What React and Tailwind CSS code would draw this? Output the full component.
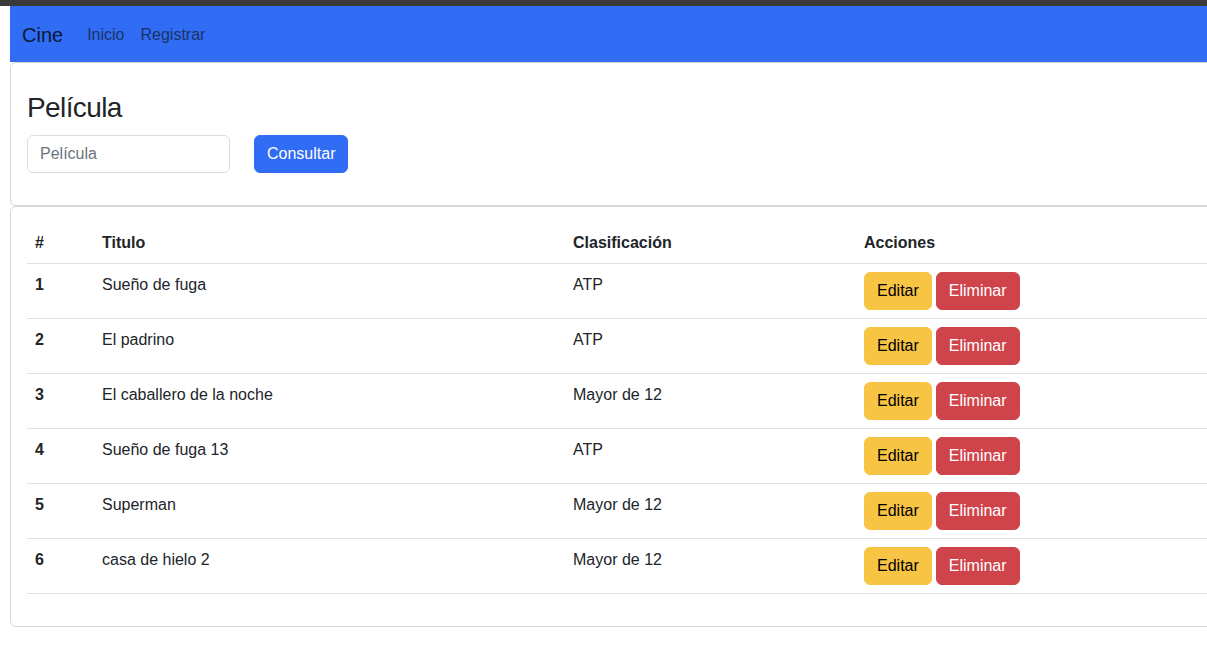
import React from 'react';

const peliculas = [
  { id: 1, titulo: 'Sueño de fuga', clasificacion: 'ATP' },
  { id: 2, titulo: 'El padrino', clasificacion: 'ATP' },
  { id: 3, titulo: 'El caballero de la noche', clasificacion: 'Mayor de 12' },
  { id: 4, titulo: 'Sueño de fuga 13', clasificacion: 'ATP' },
  { id: 5, titulo: 'Superman', clasificacion: 'Mayor de 12' },
  { id: 6, titulo: 'casa de hielo 2', clasificacion: 'Mayor de 12' },
];

const App = () => {
  return (
    <div className="w-[1207px] h-[660px] overflow-hidden bg-white text-[#212529] text-[16px] leading-6 font-['Liberation_Sans',Arial,sans-serif]">
      <div className="h-[6px] bg-[#3a3a3a]" />
      <div className="pl-[10px] w-[1240px]">
        {/* Navbar */}
        <nav className="h-[56px] bg-[#316cf4] flex items-center px-3 pt-[2px]">
          <span className="text-[20px] leading-[30px] text-[#0b1a33] mr-4">Cine</span>
          <a className="px-2 text-[#1a3466]">Inicio</a>
          <a className="px-2 text-[#1a3466]">Registrar</a>
        </nav>

        {/* Buscador */}
        <div className="border border-[#d6d6d6] rounded-[6px] p-4">
          <h3 className="mt-[12px] mb-[10px] text-[28px] leading-[1.2] tracking-[-0.6px]">Película</h3>
          <div className="flex items-center mb-4">
            <input
              placeholder="Película"
              className="w-[203px] h-[38px] border border-[#d9dce0] rounded-[6px] px-3 text-[16px] placeholder:text-[#6c757d] outline-none"
            />
            <button className="ml-6 h-[38px] px-[12px] border border-[#316cf4] rounded-[6px] bg-[#316cf4] text-white">
              Consultar
            </button>
          </div>
        </div>

        {/* Tabla */}
        <div className="border border-[#d6d6d6] rounded-[6px] p-4">
          <table className="w-full table-fixed mb-4 border-collapse text-left">
            <colgroup>
              <col className="w-[67px]" />
              <col className="w-[471px]" />
              <col className="w-[291px]" />
              <col />
            </colgroup>
            <thead>
              <tr className="border-b border-[#dee2e6]">
                <th className="px-2 py-2 font-bold">#</th>
                <th className="px-2 py-2 font-bold">Titulo</th>
                <th className="px-2 py-2 font-bold">Clasificación</th>
                <th className="px-2 py-2 font-bold">Acciones</th>
              </tr>
            </thead>
            <tbody>
              {peliculas.map((p) => (
                <tr key={p.id} className="border-b border-[#dee2e6] align-top">
                  <td className="px-2 pt-[9px] pb-2 font-bold">{p.id}</td>
                  <td className="px-2 pt-[9px] pb-2">{p.titulo}</td>
                  <td className="px-2 pt-[9px] pb-2">{p.clasificacion}</td>
                  <td className="px-2 py-2">
                    <div className="flex gap-1">
                      <button className="h-[38px] px-3 border border-[#f7c443] rounded-[6px] bg-[#f7c443] text-black">
                        Editar
                      </button>
                      <button className="h-[38px] px-3 border border-[#cf444b] rounded-[6px] bg-[#cf444b] text-white">
                        Eliminar
                      </button>
                    </div>
                  </td>
                </tr>
              ))}
            </tbody>
          </table>
        </div>
      </div>
    </div>
  );
};

export default App;
